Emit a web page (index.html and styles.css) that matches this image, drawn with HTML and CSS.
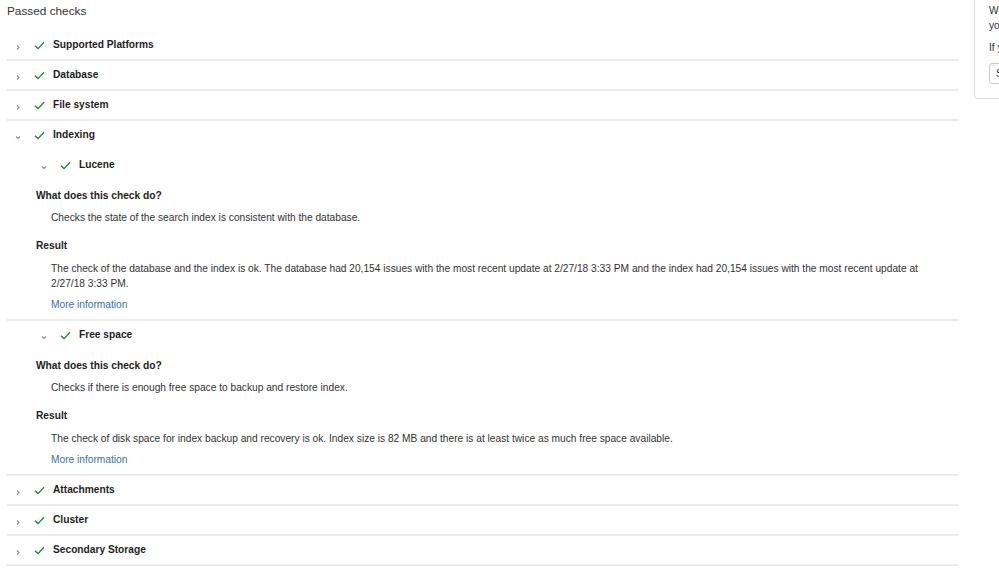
FILE: index.html
```html
<!DOCTYPE html>
<html>
    <head>
        <title>Instance health</title>
        <link rel="stylesheet" href="styles.css">
    </head>
    <body>
        <div class="page">
            <div class="main">
                <h2 class="title">Passed checks</h2>

                <div class="check">
                    <div class="check-head">
                        <span class="chev"><svg width="8" height="8" viewBox="0 0 8 8"><path d="M3 2.5 L5 4.5 L3 6.5" /></svg></span>
                        <span class="tick"><svg width="11" height="9" viewBox="0 0 11 9"><path d="M1 4.8 L4 7.6 L10 1.2" /></svg></span>
                        <span class="name">Supported Platforms</span>
                    </div>
                </div>

                <div class="check">
                    <div class="check-head">
                        <span class="chev"><svg width="8" height="8" viewBox="0 0 8 8"><path d="M3 2.5 L5 4.5 L3 6.5" /></svg></span>
                        <span class="tick"><svg width="11" height="9" viewBox="0 0 11 9"><path d="M1 4.8 L4 7.6 L10 1.2" /></svg></span>
                        <span class="name">Database</span>
                    </div>
                </div>

                <div class="check">
                    <div class="check-head">
                        <span class="chev"><svg width="8" height="8" viewBox="0 0 8 8"><path d="M3 2.5 L5 4.5 L3 6.5" /></svg></span>
                        <span class="tick"><svg width="11" height="9" viewBox="0 0 11 9"><path d="M1 4.8 L4 7.6 L10 1.2" /></svg></span>
                        <span class="name">File system</span>
                    </div>
                </div>

                <div class="check open">
                    <div class="check-head">
                        <span class="chev"><svg width="8" height="8" viewBox="0 0 8 8"><path d="M2 3.5 L4 5.5 L6 3.5" /></svg></span>
                        <span class="tick"><svg width="11" height="9" viewBox="0 0 11 9"><path d="M1 4.8 L4 7.6 L10 1.2" /></svg></span>
                        <span class="name">Indexing</span>
                    </div>

                    <div class="sub-check">
                        <div class="check-head sub-head">
                            <span class="chev"><svg width="8" height="8" viewBox="0 0 8 8"><path d="M2 3.5 L4 5.5 L6 3.5" /></svg></span>
                            <span class="tick"><svg width="11" height="9" viewBox="0 0 11 9"><path d="M1 4.8 L4 7.6 L10 1.2" /></svg></span>
                            <span class="name">Lucene</span>
                        </div>
                        <div class="details">
                            <h4>What does this check do?</h4>
                            <p class="desc">Checks the state of the search index is consistent with the database.</p>
                            <h4 class="result">Result</h4>
                            <p class="outcome">The check of the database and the index is ok. The database had 20,154 issues with the most recent update at 2/27/18 3:33 PM and the index had 20,154 issues with the most recent update at<br>2/27/18 3:33 PM.</p>
                            <a class="more" href="#">More information</a>
                        </div>
                    </div>

                    <div class="sub-check">
                        <div class="check-head sub-head">
                            <span class="chev"><svg width="8" height="8" viewBox="0 0 8 8"><path d="M2 3.5 L4 5.5 L6 3.5" /></svg></span>
                            <span class="tick"><svg width="11" height="9" viewBox="0 0 11 9"><path d="M1 4.8 L4 7.6 L10 1.2" /></svg></span>
                            <span class="name">Free space</span>
                        </div>
                        <div class="details">
                            <h4>What does this check do?</h4>
                            <p class="desc">Checks if there is enough free space to backup and restore index.</p>
                            <h4 class="result">Result</h4>
                            <p class="outcome">The check of disk space for index backup and recovery is ok. Index size is 82 MB and there is at least twice as much free space available.</p>
                            <a class="more" href="#">More information</a>
                        </div>
                    </div>
                </div>

                <div class="check">
                    <div class="check-head">
                        <span class="chev"><svg width="8" height="8" viewBox="0 0 8 8"><path d="M3 2.5 L5 4.5 L3 6.5" /></svg></span>
                        <span class="tick"><svg width="11" height="9" viewBox="0 0 11 9"><path d="M1 4.8 L4 7.6 L10 1.2" /></svg></span>
                        <span class="name">Attachments</span>
                    </div>
                </div>

                <div class="check">
                    <div class="check-head">
                        <span class="chev"><svg width="8" height="8" viewBox="0 0 8 8"><path d="M3 2.5 L5 4.5 L3 6.5" /></svg></span>
                        <span class="tick"><svg width="11" height="9" viewBox="0 0 11 9"><path d="M1 4.8 L4 7.6 L10 1.2" /></svg></span>
                        <span class="name">Cluster</span>
                    </div>
                </div>

                <div class="check">
                    <div class="check-head">
                        <span class="chev"><svg width="8" height="8" viewBox="0 0 8 8"><path d="M3 2.5 L5 4.5 L3 6.5" /></svg></span>
                        <span class="tick"><svg width="11" height="9" viewBox="0 0 11 9"><path d="M1 4.8 L4 7.6 L10 1.2" /></svg></span>
                        <span class="name">Secondary Storage</span>
                    </div>
                </div>
            </div>

            <div class="aside">
                <p>We run these checks regularly and let you know when</p>
                <p>you need to take action.</p>
                <p class="gap">If you need a hand, reach out to us.</p>
                <button class="aside-button">Send feedback</button>
            </div>
        </div>
    </body>
</html>
```

FILE: styles.css
```css
body {
    margin: 0;
    overflow: hidden;
    font-family: "Liberation Sans", Arial, sans-serif;
    color: #333333;
    background: #ffffff;
}
.page {
    display: flex;
    align-items: flex-start;
}
.main {
    width: 952px;
    margin-left: 7px;
    flex-shrink: 0;
}
.title {
    font-size: 11.8px;
    font-weight: normal;
    line-height: 18px;
    margin: 0;
    padding-top: 2px;
    height: 29px;
}
.check-head {
    display: flex;
    align-items: center;
    height: 30px;
    box-sizing: border-box;
    padding: 7px 0 7px 3px;
    border-bottom: 2px solid #ececec;
}
.check.open > .check-head,
.sub-head {
    border-bottom: 2px solid transparent;
}
.sub-head {
    padding-left: 29px;
}
.sub-check {
    border-bottom: 2px solid #ececec;
}
.chev {
    display: inline-flex;
    justify-content: center;
    width: 16px;
    padding-top: 4px;
}
.chev path {
    fill: none;
    stroke: #8c8c8c;
    stroke-width: 1.1;
}
.tick {
    display: inline-flex;
    margin-left: 8px;
    width: 11px;
}
.tick path {
    fill: none;
    stroke: #14892c;
    stroke-width: 1.3;
}
.name {
    margin-left: 8px;
    font-size: 10.2px;
    font-weight: bold;
    line-height: 16px;
    color: #1e1e1e;
}
.details {
    padding: 7px 0 7px 29px;
}
.details h4 {
    margin: 0;
    font-size: 10.2px;
    line-height: 16px;
    color: #1e1e1e;
}
.details .result {
    margin-top: 13px;
}
.desc,
.outcome {
    margin: 6px 0 0 15px;
    font-size: 10.2px;
    line-height: 15px;
}
.outcome {
    margin-top: 7px;
}
.more {
    display: block;
    margin: 6px 0 0 15px;
    font-size: 10.2px;
    line-height: 15px;
    color: #3572b0;
    text-decoration: none;
}
.aside {
    flex-shrink: 0;
    width: 300px;
    margin-left: 15px;
    margin-top: -10px;
    height: 109px;
    box-sizing: border-box;
    padding: 12px 14px 0 14px;
    border: 1px solid #dddddd;
    border-radius: 3px;
    font-size: 10.2px;
    line-height: 15px;
    color: #333333;
}
.aside p {
    margin: 0;
}
.aside .gap {
    margin-top: 7px;
}
.aside-button {
    margin-top: 8px;
    height: 21px;
    padding: 0 6px;
    border: 1px solid #cccccc;
    border-radius: 3px;
    background: #ffffff;
    font-family: "Liberation Sans", Arial, sans-serif;
    font-size: 10.2px;
    color: #333333;
}
```
